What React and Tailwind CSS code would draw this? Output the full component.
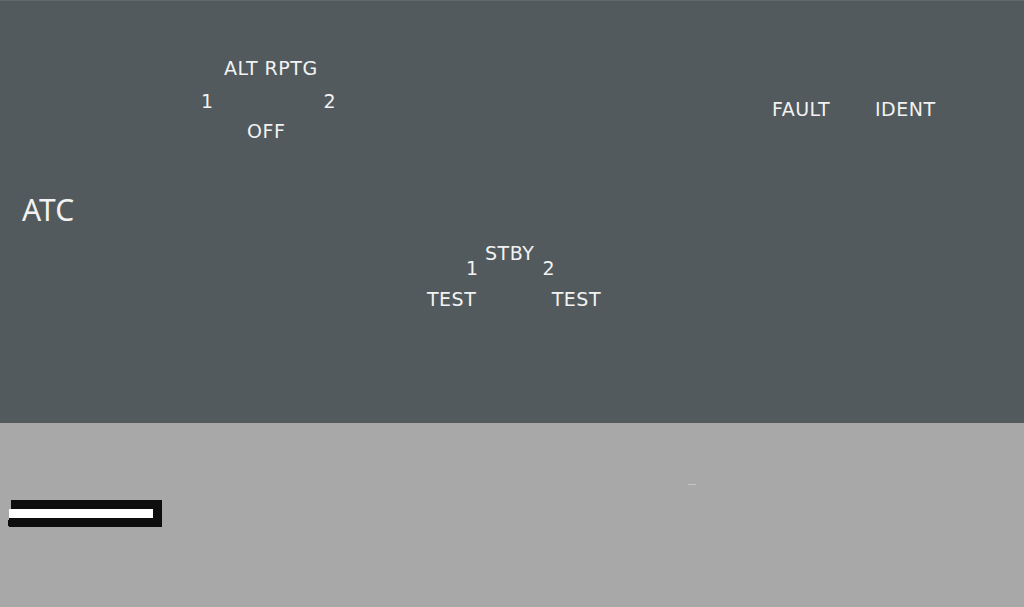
import React from "react";

const font = { fontFamily: '"DejaVu Sans", Verdana, sans-serif' };

function Label({ children, className = "" }) {
    return (
        <span className={"block leading-[19px] text-[19px] tracking-[0.5px] text-[#f2f2f2] whitespace-nowrap " + className}>
            {children}
        </span>
    );
}

export default function App() {
    return (
        <div className="w-[1024px] h-[607px] flex flex-col bg-[#a8a8a8] overflow-hidden" style={font}>
            {/* ATC panel */}
            <div className="flex items-start w-full h-[423px] shrink-0 bg-[#525a5e] border-t border-[#60676a]">
                <div className="w-[201px] shrink-0 pl-[22px] pt-[194px]">
                    <span
                        className="block leading-[30px] text-[30px] text-[#f2f2f2]"
                        style={{ fontFamily: '"Noto Sans", sans-serif' }}
                    >
                        ATC
                    </span>
                </div>

                {/* ALT RPTG selector */}
                <div className="w-[225px] shrink-0 flex flex-col items-start pt-[58px]">
                    <Label className="ml-[23px]">ALT RPTG</Label>
                    <div className="flex justify-between w-[135px] mt-[14px]">
                        <Label>1</Label>
                        <Label>2</Label>
                    </div>
                    <Label className="ml-[46px] mt-[11px]">OFF</Label>
                </div>

                {/* STBY / TEST selector */}
                <div className="w-[346px] shrink-0 flex flex-col items-start pt-[243px]">
                    <Label className="ml-[59px]">STBY</Label>
                    <div className="flex justify-between w-[89px] ml-[40px] mt-[-4px]">
                        <Label>1</Label>
                        <Label>2</Label>
                    </div>
                    <div className="flex justify-between w-[174px] ml-[1px] mt-[12px]">
                        <Label>TEST</Label>
                        <Label>TEST</Label>
                    </div>
                </div>

                <div className="w-[103px] shrink-0 pt-[99px]">
                    <Label>FAULT</Label>
                </div>
                <div className="pt-[99px]">
                    <Label>IDENT</Label>
                </div>
            </div>

            {/* lower area */}
            <div className="relative flex-1 pt-[77px] pl-[9px]">
                <div className="absolute left-[688px] top-[61px] w-[8px] h-[1px] bg-[#c4c4c4]" />
                <div className="relative w-[153px] h-[27px] bg-[#0e0e0e]">
                    <div className="absolute left-0 top-0 w-[2px] h-[9px] bg-[#a8a8a8]" />
                    <div className="absolute left-0 top-[9px] w-[144px] h-[9px] bg-white" />
                    <div className="absolute left-[-1px] top-[20px] w-[1px] h-[6px] bg-[#0e0e0e]" />
                </div>
            </div>
        </div>
    );
}
